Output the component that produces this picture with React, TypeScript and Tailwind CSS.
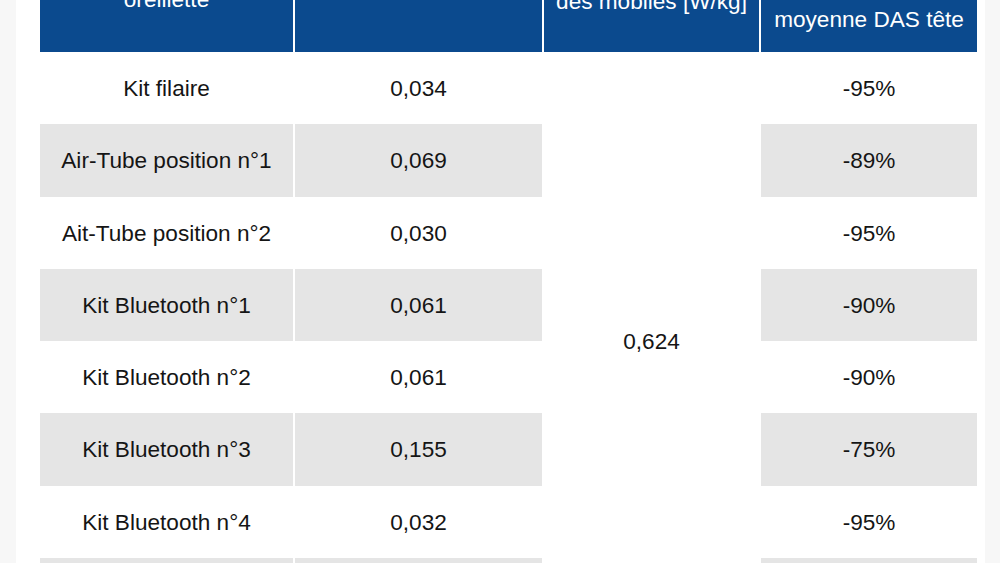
const rows = [
  { label: 'Kit filaire', das: '0,034', reduction: '-95%' },
  { label: 'Air-Tube position n°1', das: '0,069', reduction: '-89%' },
  { label: 'Ait-Tube position n°2', das: '0,030', reduction: '-95%' },
  { label: 'Kit Bluetooth n°1', das: '0,061', reduction: '-90%' },
  { label: 'Kit Bluetooth n°2', das: '0,061', reduction: '-90%' },
  { label: 'Kit Bluetooth n°3', das: '0,155', reduction: '-75%' },
  { label: 'Kit Bluetooth n°4', das: '0,032', reduction: '-95%' },
  { label: 'Kit Bluetooth n°5', das: '0,040', reduction: '-94%' },
]

const heights = ['h-[72px]', 'h-[73px]', 'h-[72px]', 'h-[72px]', 'h-[72px]', 'h-[73px]', 'h-[72px]', 'h-[72px]']

export default function App() {
  return (
    <div className="h-[563px] overflow-hidden bg-[#f7f7f7]" style={{ fontFamily: '"Liberation Sans", Arial, sans-serif' }}>
      <div className="ml-[16px] mr-[15px] h-full overflow-hidden bg-white pl-[22px]">
        <table className="-mt-[88px] table-fixed border-separate border-spacing-x-[2px] border-spacing-y-0 text-[22.6px] leading-[27px]">
          <colgroup>
            <col className="w-[253px]" />
            <col className="w-[247px]" />
            <col className="w-[215px]" />
            <col className="w-[216px]" />
          </colgroup>
          <thead>
            <tr className="h-[140px] bg-[#0b4a8e] text-white">
              <th className="bg-[#0b4a8e] px-3 pb-[39px] align-bottom font-normal">
                Type de kit
                <br />
                oreillette
              </th>
              <th className="bg-[#0b4a8e] px-3 pb-[60px] align-bottom font-normal">
                DAS tête
                <br />
                [W/kg]
              </th>
              <th className="bg-[#0b4a8e] px-2 pb-[37px] align-bottom font-normal">
                DAS tête moyen
                <br />
                des mobiles [W/kg]
              </th>
              <th className="bg-[#0b4a8e] px-2 pb-[19px] align-bottom font-normal">
                Réduction
                <br />
                moyenne DAS tête
              </th>
            </tr>
          </thead>
          <tbody className="text-[#151515]">
            {rows.map((row, i) => {
              const shade = i % 2 === 1 ? 'bg-[#e5e5e5]' : 'bg-white'
              return (
                <tr key={row.label} className={heights[i]}>
                  <td className={`${shade} text-center align-middle`}>{row.label}</td>
                  <td className={`${shade} text-center align-middle`}>{row.das}</td>
                  {i === 0 && (
                    <td rowSpan={rows.length} className="bg-white text-center align-middle">
                      0,624
                    </td>
                  )}
                  <td className={`${shade} text-center align-middle`}>{row.reduction}</td>
                </tr>
              )
            })}
          </tbody>
        </table>
      </div>
    </div>
  )
}
